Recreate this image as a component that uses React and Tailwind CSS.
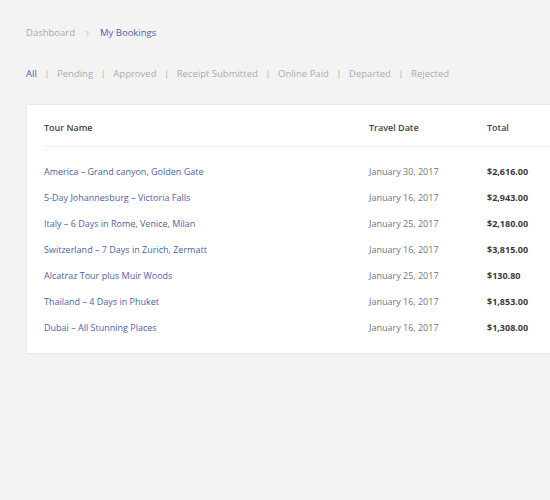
import { ChevronRight } from 'lucide-react';

const tabs = ['All', 'Pending', 'Approved', 'Receipt Submitted', 'Online Paid', 'Departed', 'Rejected'];

const bookings = [
  { name: 'America – Grand canyon, Golden Gate', date: 'January 30, 2017', total: '$2,616.00' },
  { name: '5-Day Johannesburg – Victoria Falls', date: 'January 16, 2017', total: '$2,943.00' },
  { name: 'Italy – 6 Days in Rome, Venice, Milan', date: 'January 25, 2017', total: '$2,180.00' },
  { name: 'Switzerland – 7 Days in Zurich, Zermatt', date: 'January 16, 2017', total: '$3,815.00' },
  { name: 'Alcatraz Tour plus Muir Woods', date: 'January 25, 2017', total: '$130.80' },
  { name: 'Thailand – 4 Days in Phuket', date: 'January 16, 2017', total: '$1,853.00' },
  { name: 'Dubai – All Stunning Places', date: 'January 16, 2017', total: '$1,308.00' },
];

export default function App() {
  return (
    <div className="min-h-[500px] w-[550px] overflow-hidden bg-[#f3f3f3] pl-[26px] pt-[26px] text-[9.5px] leading-[14px] font-['Open_Sans',sans-serif]">
      {/* breadcrumb */}
      <div className="flex items-center">
        <span className="text-[#a8a8a8]">Dashboard</span>
        <ChevronRight className="mx-[8px] h-[9px] w-[9px] text-[#b5b5b5]" strokeWidth={2} />
        <span className="text-[#4c5fae]">My Bookings</span>
      </div>

      {/* status filter */}
      <div className="mt-[27px] flex items-center">
        {tabs.map((t, i) => (
          <div key={t} className="flex items-center">
            {i > 0 && <span className="mx-[7.5px] text-[#b0b0b0]">|</span>}
            <span className={i === 0 ? 'text-[#4c5fae]' : 'text-[#acacac]'}>{t}</span>
          </div>
        ))}
      </div>

      {/* bookings table */}
      <div className="mt-[23px] w-[560px] border border-[#e9e9e9] bg-white pb-[12px] pl-[17px] pt-[16px] text-[9px]">
        <div className="grid grid-cols-[325px_118px_1fr] border-b border-[#ededed] pb-[11px] font-semibold text-[#444]">
          <div>Tour Name</div>
          <div>Travel Date</div>
          <div>Total</div>
        </div>
        <div className="pt-[12px]">
          {bookings.map((b) => (
            <div key={b.name} className="grid h-[26px] grid-cols-[325px_118px_1fr] items-center">
              <div className="text-[#4c5fae]">{b.name}</div>
              <div className="text-[#757575]">{b.date}</div>
              <div className="font-bold text-[#3a3a3a]">{b.total}</div>
            </div>
          ))}
        </div>
      </div>
    </div>
  );
}
